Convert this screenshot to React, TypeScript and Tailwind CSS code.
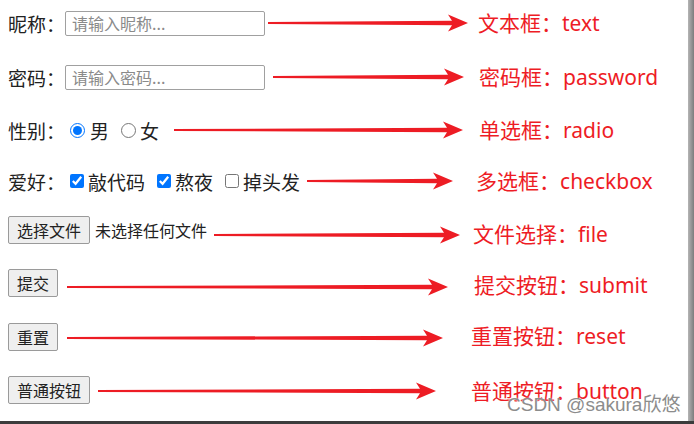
import React from "react";

const cjk = { fontFamily: '"Noto Sans CJK SC", "Noto Sans", sans-serif' };
const red = { fontFamily: '"Noto Sans", "Noto Sans CJK SC", sans-serif' };

function Arrow({ w, className = "" }: { w: number; className?: string }) {
  const c = 9;
  const d = `M0,${c - 1} L${w - 16},${c - 2.2} L${w - 20},${c - 8.5} L${w},${c} L${w - 20},${c + 8.5} L${w - 16},${c + 2.2} L0,${c + 1} Z`;
  return (
    <svg width={w} height={18} viewBox={`0 0 ${w} 18`} className={`shrink-0 ${className}`}>
      <path d={d} fill="#ed1c24" />
    </svg>
  );
}

function Label({ children }: { children: React.ReactNode }) {
  return <span className="w-[57px] shrink-0 text-[19px] leading-none text-[#222]">{children}</span>;
}

function Note({ children, className = "" }: { children: React.ReactNode; className?: string }) {
  return (
    <span className={`text-[21px] leading-none text-[#ee1c25] whitespace-nowrap ${className}`} style={red}>
      {children}
    </span>
  );
}

function Btn({ children }: { children: React.ReactNode }) {
  return (
    <button className="h-[28px] px-[8px] shrink-0 rounded-[2px] border border-[#9a9a9a] bg-[#efefef] text-[16px] leading-none text-[#222]">
      {children}
    </button>
  );
}

export default function App() {
  return (
    <div className="w-[694px] h-[424px] flex flex-col bg-white overflow-hidden" style={cjk}>
      <div className="flex flex-1 min-h-0">
        <div className="relative flex-1 flex flex-col pl-2">
          {/* 文本框 */}
          <div className="flex items-center h-[46px]">
            <Label>昵称：</Label>
            <input
              className="w-[200px] h-[25px] rounded-[2px] border border-[#a0a0a0] px-[6px] text-[16px] placeholder:text-[#8a8a8a] outline-none"
              placeholder="请输入昵称..."
            />
            <Arrow w={200} className="ml-[3px]" />
            <Note className="ml-[10px]">文本框：text</Note>
          </div>

          {/* 密码框 */}
          <div className="flex items-center h-[62px]">
            <Label>密码：</Label>
            <input
              type="text"
              className="w-[200px] h-[25px] rounded-[2px] border border-[#a0a0a0] px-[6px] text-[16px] placeholder:text-[#8a8a8a] outline-none"
              placeholder="请输入密码..."
            />
            <Arrow w={191} className="ml-[8px]" />
            <Note className="ml-[15px]">密码框：password</Note>
          </div>

          {/* 单选框 */}
          <div className="flex items-center h-[44px] text-[19px] leading-none text-[#222]">
            <span className="w-[62px] shrink-0">性别：</span>
            <input type="radio" name="sex" defaultChecked className="w-[15px] h-[15px] m-0 accent-[#0075ff]" />
            <span className="ml-[5px]">男</span>
            <input type="radio" name="sex" className="ml-[12px] w-[15px] h-[15px] m-0" />
            <span className="ml-[4px]">女</span>
            <Arrow w={289} className="ml-[15px]" />
            <Note className="ml-[16px]">单选框：radio</Note>
          </div>

          {/* 多选框 */}
          <div className="flex items-center h-[58px] text-[19px] leading-none text-[#222]">
            <span className="w-[62px] shrink-0">爱好：</span>
            <input type="checkbox" defaultChecked className="w-[14px] h-[14px] m-0 accent-[#0075ff]" />
            <span className="ml-[4px]">敲代码</span>
            <input type="checkbox" defaultChecked className="ml-[12px] w-[14px] h-[14px] m-0 accent-[#0075ff]" />
            <span className="ml-[4px]">熬夜</span>
            <input type="checkbox" className="ml-[12px] w-[14px] h-[14px] m-0" />
            <span className="ml-[4px]">掉头发</span>
            <Arrow w={146} className="ml-[7px]" />
            <Note className="ml-[23px]">多选框：checkbox</Note>
          </div>

          {/* 文件选择 */}
          <div className="flex items-center h-[46px]">
            <span className="mb-[6px] flex items-center">
              <Btn>选择文件</Btn>
              <span className="ml-[5px] text-[16px] leading-none text-[#222]">未选择任何文件</span>
            </span>
            <Arrow w={246} className="ml-[7px] mt-[4px]" />
            <Note className="ml-[13px] mt-[2px]">文件选择：file</Note>
          </div>

          {/* 提交 */}
          <div className="flex items-center h-[54px]">
            <Btn>提交</Btn>
            <Arrow w={381} className="ml-[9px] mt-[8px]" />
            <Note className="ml-[26px] mt-[4px]">提交按钮：submit</Note>
          </div>

          {/* 重置 */}
          <div className="flex items-center h-[54px]">
            <Btn>重置</Btn>
            <Arrow w={376} className="ml-[9px] mt-[2px]" />
            <Note className="ml-[28px] mb-[2px]">重置按钮：reset</Note>
          </div>

          {/* 普通按钮 */}
          <div className="flex items-center h-[52px]">
            <Btn>普通按钮</Btn>
            <Arrow w={338} className="ml-[8px] mt-[2px]" />
            <Note className="ml-[35px] mt-[2px]">普通按钮：button</Note>
          </div>

          <span
            className="absolute left-[507px] top-[395px] text-[19px] leading-none text-[#8c8c8c] whitespace-nowrap [text-shadow:0_0_2px_#fff]"
            style={{ fontFamily: '"Liberation Sans", "Noto Sans CJK SC", sans-serif' }}
          >
            CSDN @sakura欣悠
          </span>
        </div>
        <div className="w-[6px] bg-gradient-to-r from-[#b5b5b5] to-[#7d7d7d]" />
      </div>
      <div className="h-[3px] bg-[#3c3c3c]" />
    </div>
  );
}
